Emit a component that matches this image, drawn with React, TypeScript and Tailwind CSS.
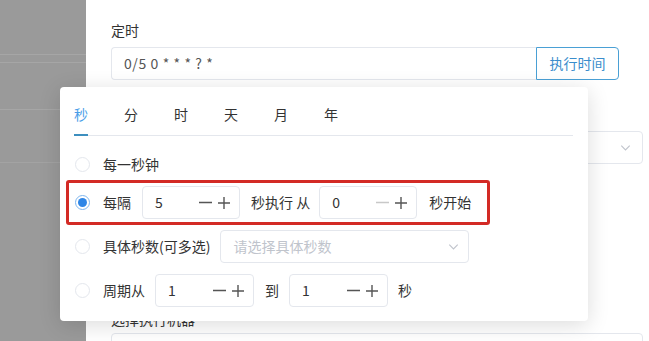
import { useState } from "react";

const font = { fontFamily: '"Noto Sans CJK SC", "Noto Sans", sans-serif' };

function Chevron({ className }: { className?: string }) {
  return (
    <svg viewBox="0 0 16 16" className={className} fill="none" stroke="currentColor" strokeWidth="1.2">
      <path d="M3.5 6 L8 10.5 L12.5 6" />
    </svg>
  );
}

function Radio({ checked }: { checked?: boolean }) {
  return (
    <span
      className={`w-[15px] h-[15px] rounded-full border flex items-center justify-center shrink-0 ${
        checked ? "border-[#7fb6ee]" : "border-[#e4e7ed]"
      }`}
    >
      {checked && <span className="w-[9px] h-[9px] rounded-full bg-[#2f86e6]" />}
    </span>
  );
}

function NumberInput({ value, width, minDisabled }: { value: string; width: string; minDisabled?: boolean }) {
  return (
    <div className={`${width} h-[33px] border border-[#e4e7ed] rounded-[4px] flex items-center pl-[12px] pr-[9px] text-[#333]`}>
      <span className="flex-1">{value}</span>
      <svg viewBox="0 0 12 12" className={`w-[13px] h-[13px] ${minDisabled ? "text-[#c8c8c8]" : "text-[#555]"}`} stroke="currentColor" strokeWidth="1.4">
        <path d="M0 6 H12" />
      </svg>
      <svg viewBox="0 0 12 12" className="w-[12px] h-[12px] ml-[6px] text-[#555]" stroke="currentColor" strokeWidth="1.4">
        <path d="M0 6 H12 M6 0 V12" />
      </svg>
    </div>
  );
}

export default function App() {
  const [tab] = useState("秒");
  const tabs = ["秒", "分", "时", "天", "月", "年"];

  return (
    <div className="relative w-[649px] h-[341px] overflow-hidden flex text-[14px]" style={font}>
      {/* page mask */}
      <div className="w-[86px] h-full bg-[#9a9a9a] flex flex-col">
        <div className="h-[55px] border-b border-[#a6a6a6]" />
        <div className="h-[8px] border-b border-[#a6a6a6]" />
        <div className="h-[47px] border-b border-[#a6a6a6]" />
        <div className="h-[53px] border-b border-[#a3a3a3]" />
      </div>

      {/* drawer */}
      <div className="flex-1 bg-white pl-[25px] pr-[6px] pt-[20px]">
        <div className="text-[#333] leading-[20px]">定时</div>
        <div className="flex mt-[7px]">
          <div className="w-[425px] h-[33px] border border-[#e4e7ed] border-r-0 rounded-l-[4px] flex items-center pl-[12px] text-[#555] tracking-[0.6px]">
            0/5 0 * * * ? *
          </div>
          <button className="w-[83px] h-[33px] border border-[#4aa0d5] rounded-r-[4px] text-[#3a8dcc] bg-white">
            执行时间
          </button>
        </div>
        <div className="mt-[51px] h-[33px] border border-[#e4e7ed] rounded-[4px] flex items-center justify-end pr-[9px]">
          <Chevron className="w-[15px] h-[15px] text-[#c0c4cc]" />
        </div>
        <div className="mt-[145px] text-[#333] leading-[20px]">选择执行机器</div>
        <div className="mt-[4px] h-[33px] border border-[#e4e7ed] rounded-[4px]" />
      </div>

      {/* cron popover */}
      <div className="absolute left-[60px] top-[87px] w-[528px] h-[234px] bg-white rounded-[4px] shadow-[0_4px_22px_rgba(0,0,0,0.14)] px-[14px] text-[#333]">
        <div className="h-[49px] border-b border-[#e4e7ed] pt-[8px] flex gap-[36px] mr-[1px]">
          {tabs.map((t) => (
            <div key={t} className={`relative h-[41px] leading-[38px] ${t === tab ? "text-[#4a9ee8]" : "text-[#333]"}`}>
              {t}
              {t === tab && <span className="absolute left-0 right-0 bottom-0 h-[2px] bg-[#3d8fbf]" />}
            </div>
          ))}
        </div>

        <div className="mt-[12px] h-[32px] flex items-center pl-[1px]">
          <Radio />
          <span className="ml-[13px]">每一秒钟</span>
        </div>

        <div className="mt-[6px] h-[33px] flex items-center pl-[1px]">
          <Radio checked />
          <span className="ml-[13px]">每隔</span>
          <div className="ml-[11px]">
            <NumberInput value="5" width="w-[98px]" />
          </div>
          <span className="ml-[11px]">秒执行 从</span>
          <div className="ml-[9px]">
            <NumberInput value="0" width="w-[98px]" minDisabled />
          </div>
          <span className="ml-[12px]">秒开始</span>
        </div>

        <div className="mt-[11px] h-[33px] flex items-center pl-[1px]">
          <Radio />
          <span className="ml-[13px]">具体秒数(可多选)</span>
          <div className="ml-[10px] w-[249px] h-[33px] border border-[#e4e7ed] rounded-[4px] flex items-center pl-[12px] pr-[7px] text-[#c0c4cc]">
            <span className="flex-1">请选择具体秒数</span>
            <Chevron className="w-[15px] h-[15px]" />
          </div>
        </div>

        <div className="mt-[11px] h-[33px] flex items-center pl-[1px]">
          <Radio />
          <span className="ml-[13px]">周期从</span>
          <div className="ml-[10px]">
            <NumberInput value="1" width="w-[99px]" />
          </div>
          <span className="ml-[11px]">到</span>
          <div className="ml-[10px]">
            <NumberInput value="1" width="w-[99px]" />
          </div>
          <span className="ml-[10px]">秒</span>
        </div>

        {/* annotation */}
        <div className="absolute left-[6px] top-[93px] w-[424px] h-[45px] border-[3px] border-[#d32a25] rounded-[3px] pointer-events-none" />
      </div>
    </div>
  );
}
